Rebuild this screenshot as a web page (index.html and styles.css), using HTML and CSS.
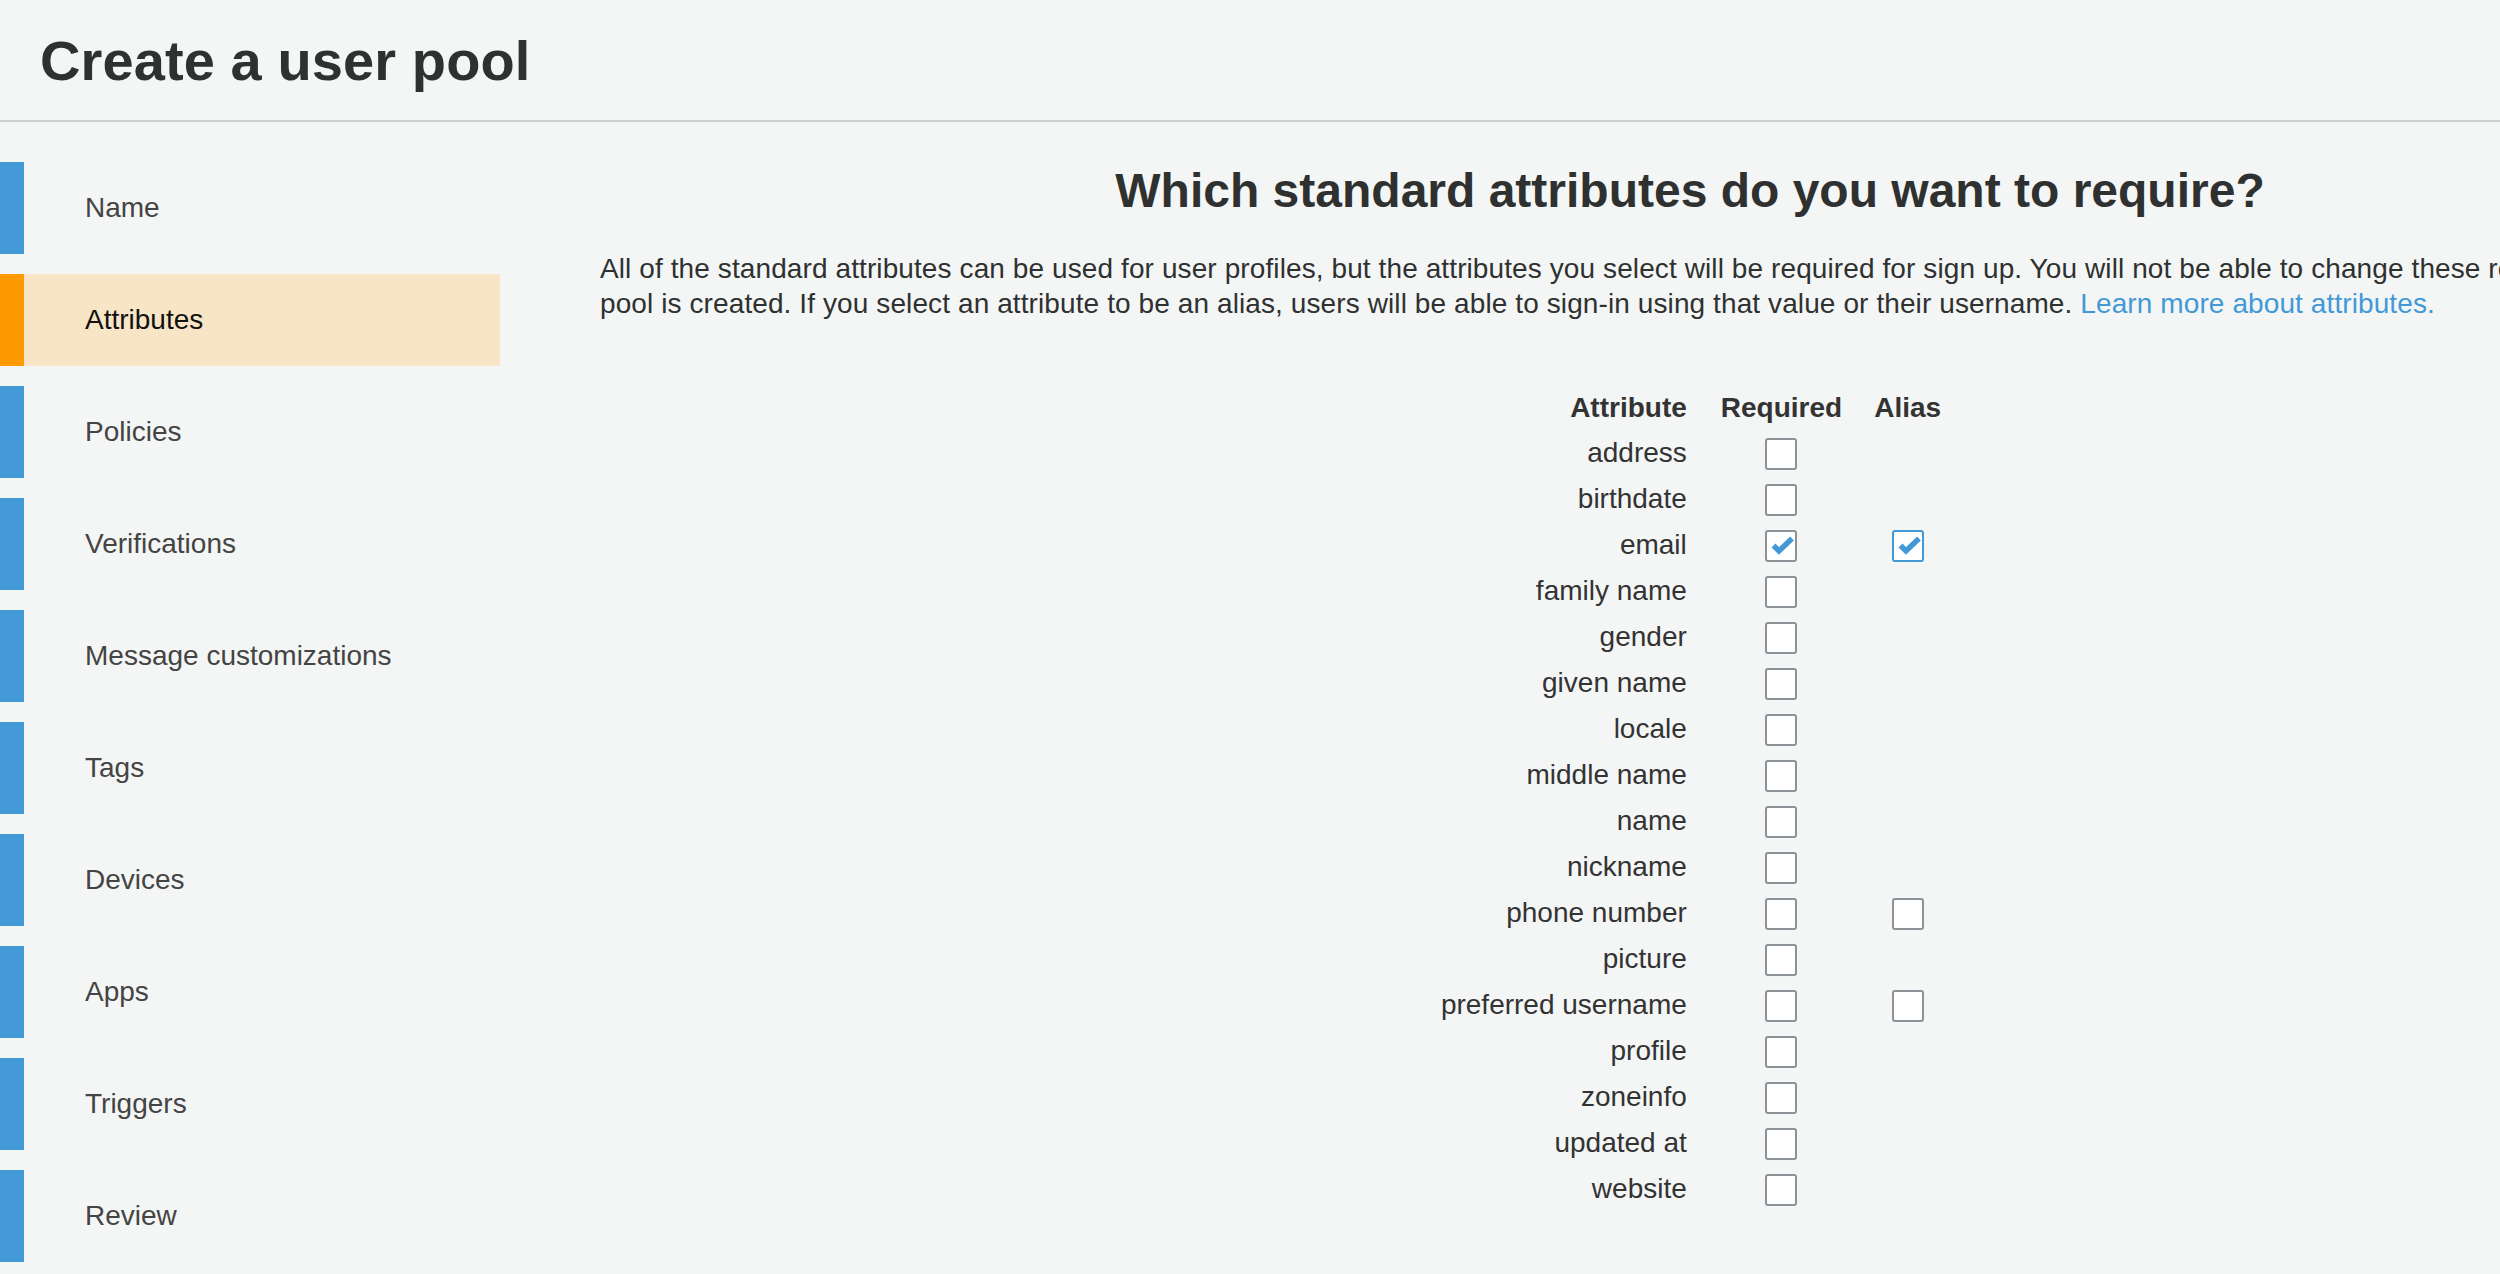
FILE: index.html
```html
<!DOCTYPE html>
<html lang="en">
<head>
<meta charset="utf-8">
<title>Create a user pool</title>
<link rel="stylesheet" href="styles.css">
</head>
<body>
<div class="page">
  <header class="top">
    <h1 class="title">Create a user pool</h1>
  </header>
  <div class="layout">
    <nav class="steps">
      <ul class="step-list">
        <li class="step">Name</li>
        <li class="step active">Attributes</li>
        <li class="step">Policies</li>
        <li class="step">Verifications</li>
        <li class="step">Message customizations</li>
        <li class="step">Tags</li>
        <li class="step">Devices</li>
        <li class="step">Apps</li>
        <li class="step">Triggers</li>
        <li class="step">Review</li>
      </ul>
    </nav>
    <main class="content">
      <h2 class="question">Which standard attributes do you want to require?</h2>
      <p class="intro"><span class="line">All of the standard attributes can be used for user profiles, but the attributes you select will be required for sign up. You will not be able to change these requirements after the</span><br><span class="line">pool is created. If you select an attribute to be an alias, users will be able to sign-in using that value or their username. <a class="link" href="#">Learn more about attributes.</a></span></p>
      <table class="attrs">
        <thead>
          <tr><th class="c-name">Attribute</th><th class="c-box">Required</th><th class="c-box c-alias">Alias</th></tr>
        </thead>
        <tbody>
          <tr><td class="c-name">address</td><td class="c-box"><span class="cb"></span></td><td class="c-box c-alias"></td></tr>
          <tr><td class="c-name">birthdate</td><td class="c-box"><span class="cb"></span></td><td class="c-box c-alias"></td></tr>
          <tr><td class="c-name">email</td><td class="c-box"><span class="cb checked"><svg class="tick" viewBox="0 0 32 32"><path d="M8.5 15.5 L14 21 L27 8.5"/></svg></span></td><td class="c-box c-alias"><span class="cb checked focus"><svg class="tick" viewBox="0 0 32 32"><path d="M8.5 15.5 L14 21 L27 8.5"/></svg></span></td></tr>
          <tr><td class="c-name">family name</td><td class="c-box"><span class="cb"></span></td><td class="c-box c-alias"></td></tr>
          <tr><td class="c-name">gender</td><td class="c-box"><span class="cb"></span></td><td class="c-box c-alias"></td></tr>
          <tr><td class="c-name">given name</td><td class="c-box"><span class="cb"></span></td><td class="c-box c-alias"></td></tr>
          <tr><td class="c-name">locale</td><td class="c-box"><span class="cb"></span></td><td class="c-box c-alias"></td></tr>
          <tr><td class="c-name">middle name</td><td class="c-box"><span class="cb"></span></td><td class="c-box c-alias"></td></tr>
          <tr><td class="c-name">name</td><td class="c-box"><span class="cb"></span></td><td class="c-box c-alias"></td></tr>
          <tr><td class="c-name">nickname</td><td class="c-box"><span class="cb"></span></td><td class="c-box c-alias"></td></tr>
          <tr><td class="c-name">phone number</td><td class="c-box"><span class="cb"></span></td><td class="c-box c-alias"><span class="cb"></span></td></tr>
          <tr><td class="c-name">picture</td><td class="c-box"><span class="cb"></span></td><td class="c-box c-alias"></td></tr>
          <tr><td class="c-name">preferred username</td><td class="c-box"><span class="cb"></span></td><td class="c-box c-alias"><span class="cb"></span></td></tr>
          <tr><td class="c-name">profile</td><td class="c-box"><span class="cb"></span></td><td class="c-box c-alias"></td></tr>
          <tr><td class="c-name">zoneinfo</td><td class="c-box"><span class="cb"></span></td><td class="c-box c-alias"></td></tr>
          <tr><td class="c-name">updated at</td><td class="c-box"><span class="cb"></span></td><td class="c-box c-alias"></td></tr>
          <tr><td class="c-name">website</td><td class="c-box"><span class="cb"></span></td><td class="c-box c-alias"></td></tr>
        </tbody>
      </table>
    </main>
  </div>
</div>
</body>
</html>
```

FILE: styles.css
```css
html, body {
  margin: 0;
  padding: 0;
  overflow: hidden;
}

body {
  background: #f4f6f6;
  font-family: "Liberation Sans", Arial, Helvetica, sans-serif;
  color: #333;
}

.page {
  width: 100%;
  height: 1274px;
  overflow: hidden;
}

.top {
  box-sizing: border-box;
  height: 122px;
  border-bottom: 2px solid #cdd0d0;
  padding: 33px 0 0 40px;
}

.title {
  margin: 0;
  font-size: 56px;
  line-height: 56px;
  font-weight: bold;
  color: #2f3130;
  letter-spacing: 0.1px;
}

.layout {
  display: flex;
  padding-top: 40px;
}

.steps {
  width: 500px;
  flex-shrink: 0;
}

.step-list {
  list-style: none;
  margin: 0;
  padding: 0;
  display: flex;
  flex-direction: column;
  gap: 20px;
}

.step {
  height: 92px;
  display: flex;
  align-items: center;
  border-left: 24px solid #4299d6;
  padding-left: 61px;
  font-size: 28px;
  color: #444;
}

.step.active {
  border-left-color: #ff9900;
  background: #f8e5c6;
  color: #111;
}

.content {
  margin-left: 100px;
  width: 2180px;
  flex-shrink: 0;
}

.question {
  margin: 0;
  font-size: 48px;
  line-height: 58px;
  font-weight: bold;
  text-align: center;
  color: #2f3130;
}

.intro {
  margin: 31px 0 0;
  font-size: 28px;
  line-height: 35px;
  color: #2f3130;
  white-space: nowrap;
  letter-spacing: 0.1px;
}

.link {
  color: #4299d6;
  text-decoration: none;
}

.attrs {
  margin: 65px auto 0;
  border-collapse: collapse;
  font-size: 28px;
  color: #333;
}

.attrs th {
  height: 44px;
  padding: 0 17px;
  font-weight: bold;
}

.attrs td {
  height: 46px;
  padding: 0 17px;
}

.attrs .c-alias {
  padding: 0 15px;
}

.c-name {
  text-align: right;
}

.c-box {
  text-align: center;
}

.cb {
  display: inline-block;
  vertical-align: middle;
  width: 32px;
  height: 32px;
  box-sizing: border-box;
  border: 2px solid #8c9297;
  border-radius: 3px;
  background: #fff;
  position: relative;
}

.cb.focus {
  border-color: #4299d6;
}

.tick {
  position: absolute;
  left: -2px;
  top: -2px;
  width: 32px;
  height: 32px;
  fill: none;
  stroke: #4299d6;
  stroke-width: 5.5;
  stroke-linecap: butt;
  stroke-linejoin: miter;
}
```
